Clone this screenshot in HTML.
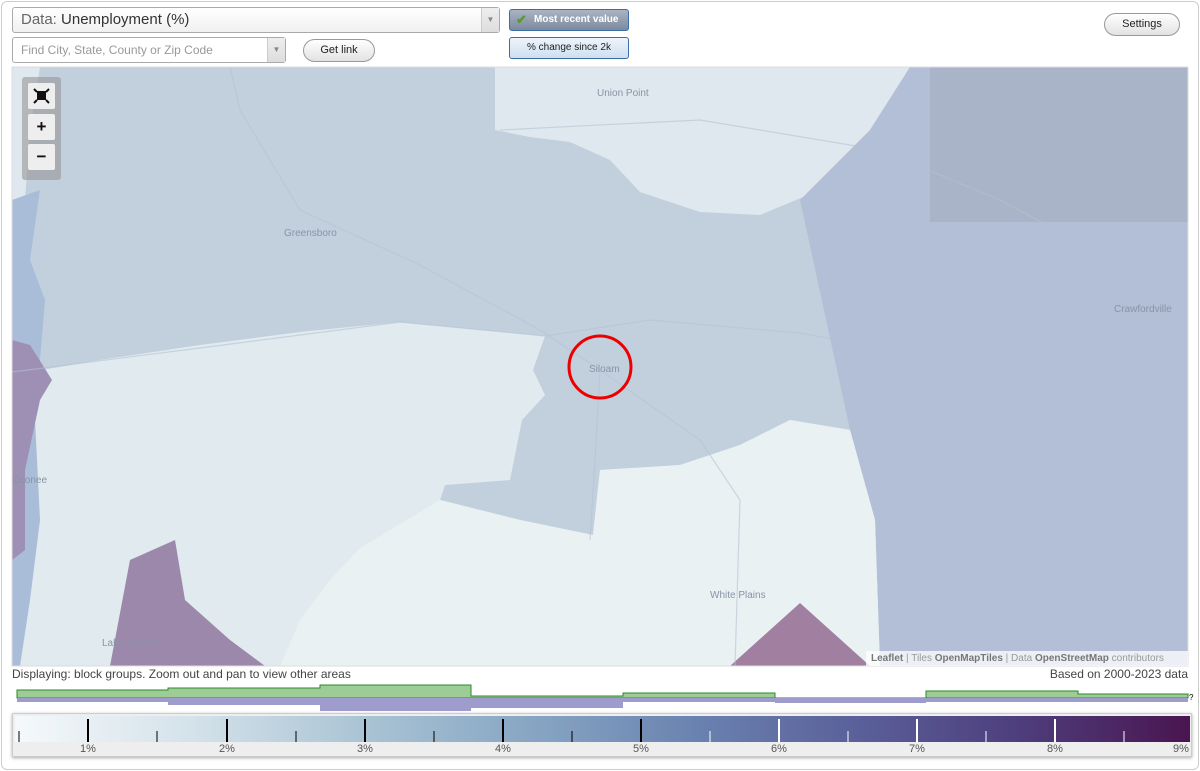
<!DOCTYPE html>
<html><head><meta charset="utf-8"><style>
*{box-sizing:border-box;margin:0;padding:0}
body{width:1200px;height:771px;background:#fff;font-family:"Liberation Sans",sans-serif;position:relative;overflow:hidden}
.frame{position:absolute;left:1px;top:1px;width:1198px;height:769px;border:1px solid #ccc;border-radius:6px}
.abs{position:absolute}
.sel{left:12px;top:7px;width:488px;height:26px;border:1px solid #aaa;border-radius:3px;background:linear-gradient(#fff,#f0f0f0);font-size:15px;line-height:24px;padding-left:8px;color:#333}
.arrow{position:absolute;right:0;top:0;width:18px;height:100%;border-left:1px solid #ccc;background:linear-gradient(#eee,#ddd);font-size:8px;color:#888;text-align:center}
.srch{left:12px;top:37px;width:274px;height:26px;border:1px solid #aaa;border-radius:3px;background:#fff;font-size:12px;line-height:24px;padding-left:8px;color:#999}
.pill{border:1px solid #999;border-radius:12px;background:linear-gradient(#fff,#e2e2e2);font-size:11px;text-align:center;color:#222}
.b1{left:509px;top:9px;width:120px;height:22px;border:1px solid #3a6ea5;border-radius:3px;background:linear-gradient(#a9b4c4,#7d8a9e);color:#fff;font-weight:bold;font-size:10px;line-height:20px;padding-left:24px}
.b2{left:509px;top:37px;width:120px;height:22px;border:1px solid #3a6ea5;border-radius:3px;background:linear-gradient(#eef4fb,#cfdff0);color:#222;font-size:10px;line-height:20px;text-align:center}
.zoom{left:22px;top:77px;width:39px;height:103px;background:rgba(150,150,150,.6);border-radius:3px}
.zb{position:absolute;left:6px;width:27px;height:26px;background:#eee;border-radius:2px;font-weight:bold;text-align:center;font-size:17px;line-height:26px;color:#111}
.lbl{position:absolute;font-size:10px;color:#8a93a6}
</style></head><body>
<div class="frame"></div>
<div class="abs sel"><span style="color:#666">Data:</span> Unemployment (%)<div class="arrow" style="line-height:24px">▼</div></div>
<div class="abs srch">Find City, State, County or Zip Code<div class="arrow" style="line-height:24px">▼</div></div>
<div class="abs pill" style="left:303px;top:39px;width:72px;height:23px;line-height:21px">Get link</div>
<div class="abs b1"><span style="position:absolute;left:6px;top:0;color:#5a9a2a;font-size:13px">✔</span>Most recent value</div>
<div class="abs b2">% change since 2k</div>
<div class="abs pill" style="left:1104px;top:13px;width:76px;height:23px;line-height:21px">Settings</div>

<svg class="abs" style="left:0;top:0" width="1200" height="771" viewBox="0 0 1200 771">
<defs><clipPath id="c"><rect x="12" y="67" width="1176" height="599"/></clipPath></defs>
<g clip-path="url(#c)">
<rect x="12" y="67" width="1176" height="599" fill="#c2d0de"/>
<polygon points="495,67 910,67 870,130 820,190 760,215 700,212 640,192 610,160 570,142 530,137 495,130" fill="#dfe8ee"/>
<polygon points="910,67 1188,67 1188,666 880,666 875,520 850,430 800,200 870,130" fill="#b3bfd6"/>
<rect x="930" y="67" width="258" height="155" fill="#aab4c8"/>
<polygon points="12,375 100,360 200,345 300,332 400,322 545,336 533,370 545,395 522,420 510,480 445,485 440,500 520,520 593,535 600,470 680,465 740,445 790,420 850,430 875,520 880,666 12,666" fill="#e0eaef"/>
<polygon points="440,500 520,520 593,535 600,470 680,465 740,445 790,420 850,430 875,520 880,666 280,666 300,620 330,580 360,548" fill="#e9f1f3"/>
<polygon points="12,67 40,67 30,130 25,200 20,260 12,300" fill="#dfe8ee"/>
<polygon points="12,200 40,190 30,260 45,300 35,420 40,520 30,600 20,666 12,666" fill="#a9bcd8"/>
<polygon points="12,340 30,345 52,380 40,400 25,470 25,550 12,560" fill="#9e8fb5"/>
<polygon points="130,560 175,540 185,600 230,640 265,666 110,666" fill="#9b88ab"/>
<polygon points="730,666 800,603 870,666" fill="#a07fa0"/>
<g fill="none" stroke="#b4c2d2" stroke-width="1.2" opacity="0.6">
<path d="M12,372 L200,348 L400,322 L545,336 L650,320 L800,333 L1000,370 L1188,408"/>
<path d="M230,67 L240,110 L300,210 L420,265 L540,330 L600,370 L700,440 L740,500 L735,666"/>
<path d="M500,130 L700,120 L880,150 L1000,200 L1188,300"/>
<path d="M600,370 L595,460 L590,540"/>
</g>
<circle cx="600" cy="367" r="31" fill="none" stroke="#e00" stroke-width="3"/>
</g>
<rect x="12" y="67" width="1176" height="599" fill="none" stroke="#ddd"/>
</svg>

<div class="lbl" style="left:597px;top:88px">Union Point</div>
<div class="lbl" style="left:284px;top:228px">Greensboro</div>
<div class="lbl" style="left:589px;top:364px">Siloam</div>
<div class="lbl" style="left:1114px;top:304px">Crawfordville</div>
<div class="lbl" style="left:710px;top:590px">White Plains</div>
<div class="lbl" style="left:102px;top:638px">Lake Oconee</div>
<div class="lbl" style="left:12px;top:475px">Oconee</div>

<div class="abs zoom">
<div class="zb" style="top:6px"><svg width="27" height="26" viewBox="0 0 27 26"><rect x="9" y="8" width="9" height="9" fill="#111"/><path d="M6,6 L9,9 M21,6 L18,9 M6,20 L9,17 M21,20 L18,17" stroke="#111" stroke-width="2"/></svg></div>
<div class="zb" style="top:37px">+</div>
<div class="zb" style="top:67px">−</div>
</div>
<div class="abs" style="left:866px;top:651px;width:322px;height:15px;background:rgba(255,255,255,.75);font-size:10px;line-height:15px;color:#999;padding-left:5px"><b style="color:#777">Leaflet</b> | Tiles <b style="color:#777">OpenMapTiles</b> | Data <b style="color:#777">OpenStreetMap</b> contributors</div>

<div class="abs" style="left:12px;top:667px;font-size:12px;color:#444">Displaying: block groups. Zoom out and pan to view other areas</div>
<div class="abs" style="right:12px;top:667px;font-size:12px;color:#444">Based on 2000-2023 data</div>

<svg class="abs" style="left:0;top:680px" width="1200" height="35">
<path d="M17,10 H168 V8 H320 V5 H471 V16 H623 V13 H775 V18 H926 V11 H1078 V14 H1188 V18 H17Z" fill="#9dcc97" stroke="#2a8a2a" stroke-width="1"/>
<path d="M17,18 H1188 V22 H1078 V22 H926 V23 H775 V22 H623 V28 H471 V31 H320 V25 H168 V22 H17Z" fill="#9e9ccc"/>
<text x="1189" y="20" font-size="8" font-family="Liberation Sans">?</text>
</svg>

<div class="abs" style="left:12px;top:713px;width:1180px;height:44px;border:1px solid #ccc;box-shadow:0 1px 3px #aaa;background:#eee">
<div style="position:absolute;left:2px;top:2px;width:1175px;height:26px;background:linear-gradient(90deg,#f5f9fb,#d4e2ea 15%,#a9c3d4 30%,#85a3c2 45%,#6a82b0 58%,#5a5f99 72%,#4e3f7e 85%,#4a1550)"></div>
<svg style="position:absolute;left:0;top:0" width="1180" height="44">
<g stroke="#000" stroke-width="2">
<line x1="75" y1="5" x2="75" y2="28"/><line x1="214" y1="5" x2="214" y2="28"/><line x1="352" y1="5" x2="352" y2="28"/><line x1="490" y1="5" x2="490" y2="28"/><line x1="628" y1="5" x2="628" y2="28"/>
</g>
<g stroke="#000" stroke-width="1">
<line x1="6" y1="17" x2="6" y2="28"/><line x1="144" y1="17" x2="144" y2="28"/><line x1="283" y1="17" x2="283" y2="28"/><line x1="421" y1="17" x2="421" y2="28"/><line x1="559" y1="17" x2="559" y2="28"/>
</g>
<g stroke="#fff" stroke-width="2"><line x1="766" y1="5" x2="766" y2="28"/><line x1="904" y1="5" x2="904" y2="28"/><line x1="1042" y1="5" x2="1042" y2="28"/></g>
<g stroke="#fff" stroke-width="1"><line x1="697" y1="17" x2="697" y2="28"/><line x1="835" y1="17" x2="835" y2="28"/><line x1="973" y1="17" x2="973" y2="28"/><line x1="1111" y1="17" x2="1111" y2="28"/></g>
<g font-size="11" fill="#555" font-family="Liberation Sans" text-anchor="middle">
<text x="75" y="38">1%</text><text x="214" y="38">2%</text><text x="352" y="38">3%</text><text x="490" y="38">4%</text><text x="628" y="38">5%</text><text x="766" y="38">6%</text><text x="904" y="38">7%</text><text x="1042" y="38">8%</text><text x="1168" y="38">9%</text>
</g></svg>
</div>
</body></html>
